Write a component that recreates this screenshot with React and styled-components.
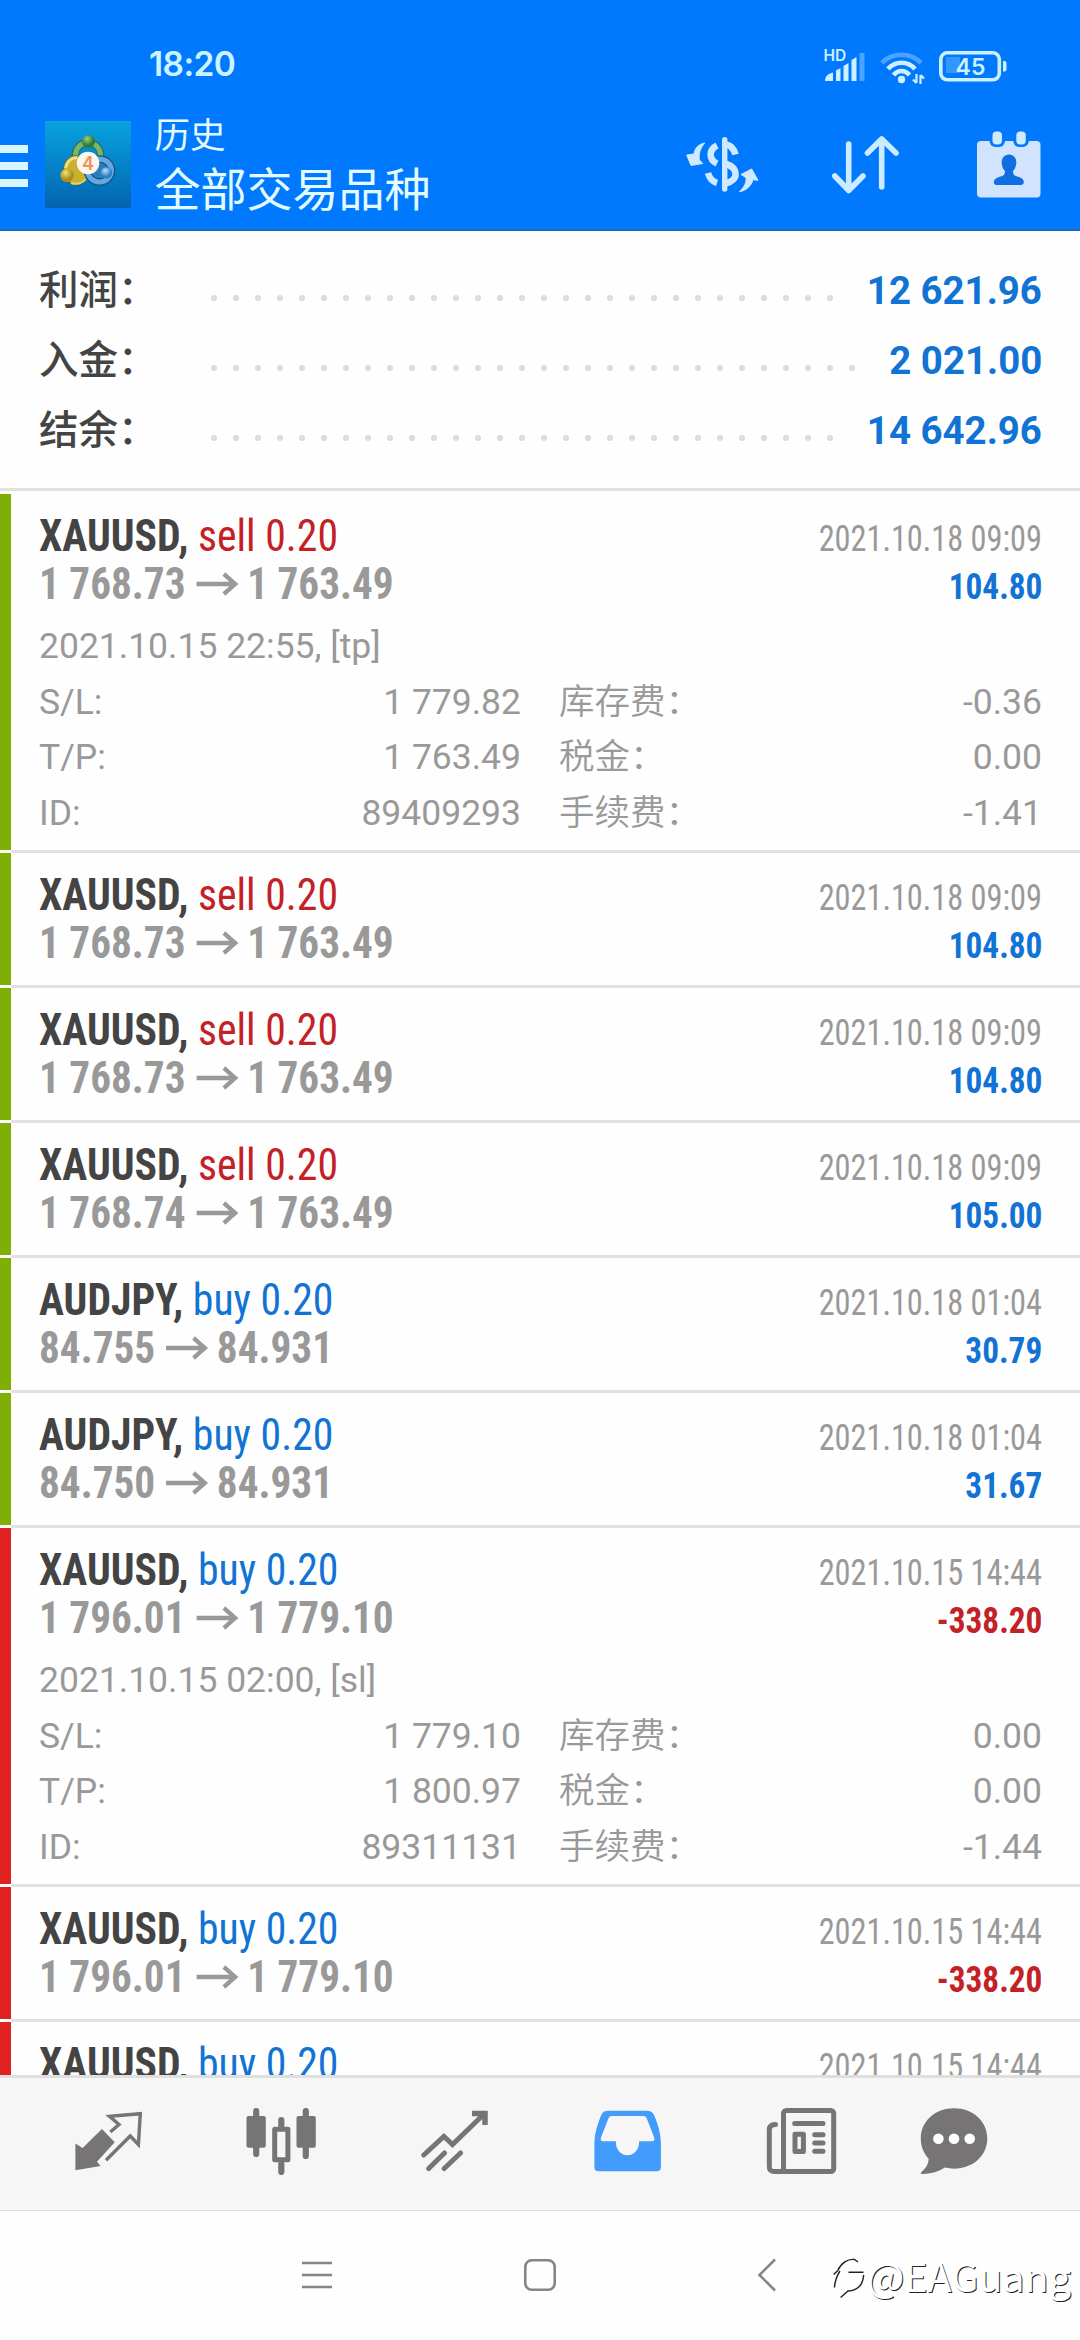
import styled, { createGlobalStyle } from 'styled-components';

const summary = [
	{ label: '利润：', value: '12 621.96' },
	{ label: '入金：', value: '2 021.00' },
	{ label: '结余：', value: '14 642.96' },
];

const trades = [
	{
		symbol: 'XAUUSD', side: 'sell', volume: '0.20', open: '1 768.73', close: '1 763.49', time: '2021.10.18 09:09', profit: '104.80',
		details: { opened: '2021.10.15 22:55, [tp]', sl: '1 779.82', tp: '1 763.49', id: '89409293', swap: '-0.36', taxes: '0.00', fee: '-1.41' },
	},
	{ symbol: 'XAUUSD', side: 'sell', volume: '0.20', open: '1 768.73', close: '1 763.49', time: '2021.10.18 09:09', profit: '104.80' },
	{ symbol: 'XAUUSD', side: 'sell', volume: '0.20', open: '1 768.73', close: '1 763.49', time: '2021.10.18 09:09', profit: '104.80' },
	{ symbol: 'XAUUSD', side: 'sell', volume: '0.20', open: '1 768.74', close: '1 763.49', time: '2021.10.18 09:09', profit: '105.00' },
	{ symbol: 'AUDJPY', side: 'buy', volume: '0.20', open: '84.755', close: '84.931', time: '2021.10.18 01:04', profit: '30.79' },
	{ symbol: 'AUDJPY', side: 'buy', volume: '0.20', open: '84.750', close: '84.931', time: '2021.10.18 01:04', profit: '31.67' },
	{
		symbol: 'XAUUSD', side: 'buy', volume: '0.20', open: '1 796.01', close: '1 779.10', time: '2021.10.15 14:44', profit: '-338.20',
		details: { opened: '2021.10.15 02:00, [sl]', sl: '1 779.10', tp: '1 800.97', id: '89311131', swap: '0.00', taxes: '0.00', fee: '-1.44' },
	},
	{ symbol: 'XAUUSD', side: 'buy', volume: '0.20', open: '1 796.01', close: '1 779.10', time: '2021.10.15 14:44', profit: '-338.20' },
	{ symbol: 'XAUUSD', side: 'buy', volume: '0.20', open: '1 796.01', close: '1 779.10', time: '2021.10.15 14:44', profit: '-338.20' },
];

const StatusIcons = () => (
	<svg width="184" height="38" viewBox="0 0 184 38">
		<text x="0.5" y="15" fontFamily="Inter, sans-serif" fontWeight="600" fontSize="15.5" fill="#cdf0ff">HD</text>
		<g fill="#cdf0ff">
			<path d="M2 35 C2 30 5 28 10 26.500 V35 Z" />
			<path d="M13 24.500 L17.500 22 V35 H13 Z" />
			<path d="M20.500 20 L25.500 17 V35 H20.500 Z" />
			<path d="M28.500 14 L33.500 11 V35 H28.500 Z" />
		</g>
		<path d="M36.500 7 H41.500 V35 H36.500 Z" fill="#4ba4ff" />
		<g fill="none" strokeWidth="4.500">
			<path d="M59 17 C69 6 88 6 98 17" stroke="#4ba4ff" />
			<path d="M65 23 C72 14.500 85 14.500 92 23" stroke="#cdf0ff" />
			<path d="M70.500 29 C75 23.500 82 23.500 86.500 29" stroke="#cdf0ff" />
		</g>
		<circle cx="78.500" cy="33.500" r="3.700" fill="#cdf0ff" />
		<path d="M93.500 28 V37 M93.500 37 L90 33.500 M97.500 38 V29 M97.500 29 L101 32.500" stroke="#cdf0ff" strokeWidth="2.200" fill="none" />
		<rect x="123" y="11" width="14" height="16" fill="#3297ff" />
		<rect x="117.800" y="6.800" width="58.500" height="27" rx="6.500" fill="none" stroke="#cdf0ff" strokeWidth="3.600" />
		<path d="M180 15 h1.500 a2 2 0 0 1 2 2 v6.500 a2 2 0 0 1 -2 2 h-1.500 Z" fill="#cdf0ff" />
		<text x="147.500" y="28.500" textAnchor="middle" fontFamily="Inter, sans-serif" fontWeight="600" fontSize="23" fill="#cdf0ff">45</text>
	</svg>
);

const Logo = () => (
	<svg width="86" height="87" viewBox="0 0 86 87">
		<defs>
			<linearGradient id="tile" x1="0" y1="0" x2="0" y2="1">
				<stop offset="0" stopColor="#08a3e0" />
				<stop offset="0.5" stopColor="#0583c8" />
				<stop offset="1" stopColor="#0463b0" />
			</linearGradient>
			<radialGradient id="green" cx="0.4" cy="0.3"><stop offset="0" stopColor="#9fd07a" /><stop offset="1" stopColor="#2d7a38" /></radialGradient>
			<radialGradient id="yellow" cx="0.4" cy="0.3"><stop offset="0" stopColor="#f2e070" /><stop offset="1" stopColor="#a8901c" /></radialGradient>
			<radialGradient id="sky" cx="0.4" cy="0.3"><stop offset="0" stopColor="#b5e2fb" /><stop offset="1" stopColor="#2d80c6" /></radialGradient>
		</defs>
		<rect width="86" height="87" fill="url(#tile)" />
		<circle cx="43" cy="34" r="12.500" fill="none" stroke="#2c6e50" strokeWidth="7.500" />
		<circle cx="43" cy="34" r="12.500" fill="none" stroke="#7ab56c" strokeWidth="5" />
		<ellipse cx="31" cy="49" rx="12.500" ry="14.500" fill="#c9b030" stroke="#5d6b3c" />
		<path d="M20.500 47 C21.500 41 26 37 32 36.500" fill="none" stroke="#f0e27a" strokeWidth="3" />
		<path d="M26 62 C32 64 38 62 41 58" fill="none" stroke="#e8d35a" strokeWidth="2" />
		<ellipse cx="54.500" cy="49.500" rx="12" ry="11.500" fill="#2a7cba" stroke="#154f86" strokeWidth="7.500" />
		<ellipse cx="54.500" cy="49.500" rx="12" ry="11.500" fill="none" stroke="#62aade" strokeWidth="5" />
		<circle cx="43.500" cy="20.500" r="6.500" fill="url(#green)" />
		<circle cx="22" cy="54.500" r="6.800" fill="url(#yellow)" />
		<circle cx="61.500" cy="52" r="5.800" fill="url(#sky)" />
		<circle cx="43" cy="42" r="11.300" fill="#fbf6f0" />
		<text x="43" y="48.500" textAnchor="middle" fontFamily="Inter, sans-serif" fontWeight="600" fontSize="18" fill="#ee9350">4</text>
	</svg>
);

const CurrencyIcon = () => (
	<svg width="73" height="56" viewBox="0 0 73 56">
		<path d="M38.700 2.700 V52" stroke="#cfe9ff" strokeWidth="5.400" strokeLinecap="round" />
		<g fill="none" stroke="#cfe9ff" strokeWidth="6.600">
			<path d="M31 8.500 C22.500 13 22.500 22.500 31 26.500" />
			<path d="M22 36 C23.500 41.500 26.500 44.500 31 46" />
			<path d="M40 7.500 C45 8.500 48 11.500 49.500 17.500" />
			<path d="M39 26.500 C53 31 53 43 40 46.300" />
		</g>
		<g fill="#cfe9ff" stroke="#cfe9ff" strokeLinejoin="round">
			<path d="M18.700 6 C12 7.500 9 11 8 17 L0.700 18 L5 28.500 L16.700 26.500 L13.300 22.700 C12.500 16 14.500 11 18.700 6 Z" />
			<path d="M53.500 54.700 C58.500 49.500 60.500 46 60 40.500 L55 37.500 L65.700 32 L72 43.300 L67 42.700 C65 49.500 60 53.500 53.500 54.700 Z" />
		</g>
	</svg>
);

const SortIcon = () => (
	<svg width="67" height="58" viewBox="0 0 67 58" fill="none" stroke="#cdebff" strokeWidth="5.600" strokeLinecap="round" strokeLinejoin="round">
		<path d="M16.700 8 V54 M2.800 40 L16.700 54.500 L31 40" />
		<path d="M49.700 51 V3 M35.500 17 L49.700 3 L64 17" />
	</svg>
);

const CalendarIcon = () => (
	<svg width="64" height="67" viewBox="0 0 64 67">
		<rect y="10" width="63.500" height="56.500" rx="4" fill="#d2e4fd" />
		<rect x="12.500" y="-3" width="15.500" height="19" rx="6" fill="#0079ff" />
		<rect x="36.300" y="-3" width="15.500" height="19" rx="6" fill="#0079ff" />
		<rect x="15.500" y="0.500" width="9.500" height="13" rx="4" fill="#cdebff" />
		<rect x="39.300" y="0.500" width="9.500" height="13" rx="4" fill="#cdebff" />
		<path d="M32 23.500 C37 23.500 39.500 27.500 39.300 32 C39 36 37.500 38.500 36 40 C36 44 38 45 42 46 C45.500 47 46.800 49 46.800 51 C46.800 53 45.500 54 44 54 H19.500 C18 54 16.800 53 16.800 51 C16.800 49 18.500 47 22 46 C26 45 28 44 28 40 C26.500 38.500 25 36 24.700 32 C24.500 27.500 27 23.500 32 23.500 Z" fill="#0f6fe0" />
	</svg>
);

const QuotesIcon = () => (
	<svg width="67" height="60" viewBox="0 0 67 60">
		<path d="M0.400 32.500 L7.600 37 L27 18 L39.700 31.300 L22 50.700 L25.500 55 L0.400 59.300 Z" fill="#767474" />
		<path d="M35.300 21 L44 13.500 L34.500 5.300 L65.300 2.700 L63.400 33.500 L55.200 25 L31 49.300" fill="none" stroke="#767474" strokeWidth="3.400" />
	</svg>
);

const ChartIcon = () => (
	<svg width="70" height="67" viewBox="0 0 70 67" fill="#767474" stroke="#767474">
		<path d="M10.200 3 V46 M59.800 3 V48 M35.300 12 V18 M35.300 56 V64" strokeWidth="6.200" strokeLinecap="round" />
		<rect x="0.500" y="8" width="19.300" height="31.700" rx="2" stroke="none" />
		<rect x="50.500" y="8" width="19.300" height="31.700" rx="2" stroke="none" />
		<rect x="28.700" y="21.300" width="13.200" height="30.500" fill="#f7f6f6" strokeWidth="5" strokeLinejoin="round" />
	</svg>
);

const TradeIcon = () => (
	<svg width="67" height="62" viewBox="0 0 67 62" fill="none" stroke="#767474" strokeWidth="5" strokeLinecap="round">
		<path d="M2.800 45 L22.900 26.500 L31.500 34.500 L62 5" />
		<path d="M51 3.500 H64 V15" strokeWidth="5.500" strokeLinecap="butt" />
		<path d="M7.700 58.500 L23.500 43 M23.200 58.500 L39.500 43" />
	</svg>
);

const HistoryIcon = () => (
	<svg width="67" height="62" viewBox="0 0 67 62">
		<path fillRule="evenodd" fill="#429cfb" d="M14 0.700 H53 C56.500 0.700 58.500 2 59.800 4.500 C64 14 66.900 24 66.900 34 V57 C66.900 60 65.500 61.300 62.500 61.300 H4.800 C2 61.300 0.400 60 0.400 57 V34 C0.400 24 3.500 14 7.500 4.500 C8.700 2 10.700 0.700 14 0.700 Z M18 6 C16 6 15 7 14.200 9 L7.200 27 C6.200 29.500 6.700 31.300 9 31.300 H21.800 C21.800 50 45.200 50 45.200 31.300 H58 C60.500 31.300 61 29.500 60 27 L53 9 C52.200 7 51.300 6 49.300 6 Z" />
	</svg>
);

const NewsIcon = () => (
	<svg width="68" height="68" viewBox="1 0 68 68" overflow="visible" fill="none" stroke="#767474" strokeWidth="5" strokeLinecap="round" strokeLinejoin="round">
		<path d="M10.500 17.500 C6.500 17.500 4.300 19 4.300 23 V59 C4.300 63 6 64.500 9.500 64.500 H20" />
		<rect x="18.500" y="3.500" width="50.200" height="61" rx="3" />
		<path d="M29.700 16.500 H58 M49.700 27.700 H58 M49.700 36 H58 M49.700 44.300 H58" />
		<rect x="30" y="27.300" width="8.400" height="17.200" />
	</svg>
);

const ChatIcon = () => (
	<svg width="68" height="67" viewBox="0 0 68 67">
		<path d="M34 0.300 C53 0.300 67.300 13.500 67.300 30.500 C67.300 47.500 53 60.700 34 60.700 C31 60.700 28 60.300 25 59.600 C17 64.500 9 66.300 1.500 66 C0.600 65.300 0.700 64.700 1.500 64 C6 60 8.500 56.500 8.600 50.500 C3.500 45 0.800 38.500 0.800 30.500 C0.800 13.500 15 0.300 34 0.300 Z" fill="#767474" />
		<circle cx="18.400" cy="30.700" r="5.300" fill="#fff" />
		<circle cx="34" cy="30.700" r="5.300" fill="#fff" />
		<circle cx="49.700" cy="30.700" r="5.300" fill="#fff" />
	</svg>
);

const WatermarkLogo = () => (
	<svg width="36" height="44" viewBox="0 0 36 44" fill="none" strokeWidth="1.400">
		<path d="M2.700 17.500 L6.800 13.500 C10 6 17 1.500 23.400 2.500 L27 5 M17.500 15.300 H32.500 M32.700 18 C32 27 27 33.500 17 34 L9.600 40.500 M9 14 C5 20 3.800 25 3.400 30.500" stroke="#222" />
	</svg>
);

const Trade = ({ trade }) => {
	const { symbol, side, volume, open, close, time, profit, details } = trade;
	const loss = profit.startsWith('-');

	return (
		<Row>
			<Marker $loss={loss} />
			<RowBody $open={!!details}>
				<Line>
					<Symbol>{symbol}, <Side $side={side}>{side} {volume}</Side></Symbol>
					<Time>{time}</Time>
				</Line>
				<Line>
					<Price>
						{open}
						<svg width="45" height="27" viewBox="0 0 45 27" fill="none" stroke="#999" strokeWidth="4.300">
							<path d="M0 12 H41 M29 2 L41 12 L29 22" />
						</svg>
						{close}
					</Price>
					<Profit $loss={loss}>{profit}</Profit>
				</Line>
				{details && (
					<Details>
						<Opened>{details.opened}</Opened>
						<span>S/L:</span><Value>{details.sl}</Value><Fee>库存费：</Fee><Value>{details.swap}</Value>
						<span>T/P:</span><Value>{details.tp}</Value><Fee>税金：</Fee><Value>{details.taxes}</Value>
						<span>ID:</span><Value>{details.id}</Value><Fee>手续费：</Fee><Value>{details.fee}</Value>
					</Details>
				)}
			</RowBody>
		</Row>
	);
};

const App = () => (
	<Screen>
		<GlobalStyle />
		<Header>
			<StatusBar>
				<Clock>18:20</Clock>
				<StatusIcons />
			</StatusBar>
			<AppBar>
				<Menu><i /><i /><i /></Menu>
				<Logo />
				<Titles>
					<small>历史</small>
					<h1>全部交易品种</h1>
				</Titles>
				<Actions>
					<CurrencyIcon />
					<SortIcon />
					<CalendarIcon />
				</Actions>
			</AppBar>
		</Header>
		<Summary>
			{summary.map((item) => (
				<SummaryRow key={item.label}>
					<SummaryLabel>{item.label}</SummaryLabel>
					<Dots />
					<SummaryValue>{item.value}</SummaryValue>
				</SummaryRow>
			))}
		</Summary>
		<List>
			{trades.map((trade, i) => <Trade key={i} trade={trade} />)}
		</List>
		<TabBar>
			<Tab><QuotesIcon /></Tab>
			<Tab><ChartIcon /></Tab>
			<Tab><TradeIcon /></Tab>
			<Tab><HistoryIcon /></Tab>
			<Tab><NewsIcon /></Tab>
			<Tab><ChatIcon /></Tab>
		</TabBar>
		<SystemNav>
			<svg width="32" height="34" viewBox="0 0 32 34" stroke="#858585" strokeWidth="2.600"><path d="M1 5 H31 M1 17 H31 M1 29 H31" /></svg>
			<svg width="32" height="34" viewBox="0 0 32 34" fill="none" stroke="#858585" strokeWidth="2.600"><rect x="1.300" y="2.300" width="29.400" height="29.400" rx="6.500" /></svg>
			<svg width="32" height="34" viewBox="0 0 32 34" fill="none" stroke="#858585" strokeWidth="2.600"><path d="M28 1.500 L12.500 17 L28 32.500" /></svg>
			<Watermark><WatermarkLogo />@EAGuang</Watermark>
		</SystemNav>
	</Screen>
);

const GlobalStyle = createGlobalStyle`
	* {
		box-sizing: border-box;
	}

	body {
		margin: 0;
		background: #fff;
		font-family: Roboto, "Noto Sans CJK SC", sans-serif;
	}

	svg {
		display: block;
		flex: none;
	}
`;

const Screen = styled.div`
	display: flex;
	flex-direction: column;
	width: 1080px;
	height: 2340px;
	overflow: hidden;
	background: #fefefe;
`;

const Header = styled.header`
	flex: none;
	height: 231px;
	background: #0079ff;
	border-bottom: 2px solid #1e67b4;
`;

const StatusBar = styled.div`
	display: flex;
	align-items: center;
	justify-content: space-between;
	height: 88px;
	padding: 41px 73px 0 149px;
`;

const Clock = styled.span`
	color: #cdf3ff;
	font-family: Inter, Roboto, sans-serif;
	font-size: 33.5px;
	font-weight: 600;
	letter-spacing: -0.6px;
	line-height: 49px;
`;

const AppBar = styled.div`
	display: flex;
	align-items: center;
	height: 141px;
	padding: 12px 39px 0 0;
`;

const Menu = styled.div`
	display: flex;
	flex-direction: column;
	gap: 9px;
	width: 28px;
	margin: 3px 17px 0 0;

	i {
		height: 8px;
		background: #d8f6ff;
	}
`;

const Titles = styled.div`
	margin: -4px 0 0 23.5px;
	color: #e2fbff;
	font-family: "Noto Sans CJK SC", sans-serif;

	small {
		display: block;
		font-size: 35.5px;
		line-height: 47px;
	}

	h1 {
		margin: 0;
		font-size: 46px;
		font-weight: 400;
		line-height: 60px;
	}
`;

const Actions = styled.div`
	display: flex;
	align-items: center;
	gap: 73px;
	margin-left: auto;

	svg:last-child {
		margin-left: 5px;
	}
`;

const Summary = styled.section`
	flex: none;
	height: 260px;
	margin-bottom: 3px;
	padding: 25px 38px 0 39px;
	border-bottom: 3px solid #e2e2e2;
`;

const SummaryRow = styled.div`
	display: flex;
	align-items: baseline;
	height: 70px;
	font-size: 39.5px;
	font-weight: 500;
	line-height: 70px;
`;

const SummaryLabel = styled.span`
	width: 163.5px;
	color: #444;
`;

const Dots = styled.span`
	align-self: stretch;
	flex: 1;
	margin-right: 21px;
	background: radial-gradient(circle, #dcdcdc 2.6px, transparent 3.6px) 0 31px / 22px 22px repeat-x;
`;

const SummaryValue = styled.span`
	color: #1173d4;
	font-weight: 700;
	transform: scaleX(0.973);
	transform-origin: right;
`;

const List = styled.main`
	flex: none;
	height: 1581px;
	overflow: hidden;
`;

const Row = styled.article`
	display: flex;
`;

const Marker = styled.div`
	width: 11px;
	margin-bottom: 3px;
	background: ${(props) => (props.$loss ? '#e02222' : '#7fae04')};
`;

const RowBody = styled.div`
	flex: 1;
	height: ${(props) => (props.$open ? '359px' : '135px')};
	padding: 19px 38px 0 28px;
	border-bottom: 3px solid #e2e2e2;
`;

/* Roboto's condensed cut is still a little wide, so each text is squeezed towards its own edge */
const Line = styled.div`
	display: flex;
	align-items: baseline;
	justify-content: space-between;
	height: 48px;
	font-family: "Roboto Condensed", Roboto, sans-serif;
	font-stretch: 75%;
	line-height: 48px;
	white-space: nowrap;
`;

const Symbol = styled.strong`
	color: #444;
	font-size: 43.5px;
	font-weight: 700;
	transform: scaleX(0.959);
	transform-origin: left;
`;

const Side = styled.span`
	color: ${(props) => (props.$side === 'sell' ? '#c42127' : '#1173d4')};
	font-weight: 400;
`;

const Price = styled.span`
	color: #999;
	font-size: 43.5px;
	font-weight: 700;
	transform: scaleX(0.948);
	transform-origin: left;

	svg {
		display: inline-block;
		margin: 0 9px 0 11px;
	}
`;

const Time = styled.span`
	color: #999;
	font-size: 36px;
	transform: scaleX(0.897);
	transform-origin: right;
`;

const Profit = styled.span`
	color: ${(props) => (props.$loss ? '#c42127' : '#1173d4')};
	font-size: 36px;
	font-weight: 700;
	transform: scaleX(0.924);
	transform-origin: right;
`;

const Details = styled.div`
	display: grid;
	grid-template-columns: 100px 382px 180px 1fr;
	grid-auto-rows: 55.7px;
	align-items: baseline;
	margin-top: 10px;
	color: #999;
	font-size: 35.5px;
	font-weight: 400;
	line-height: 55.7px;
	white-space: nowrap;
`;

const Opened = styled.span`
	grid-column: 1 / -1;
`;

const Value = styled.span`
	text-align: right;
`;

const Fee = styled.span`
	padding-left: 38px;
	font-weight: 350;
`;

const TabBar = styled.nav`
	display: grid;
	flex: none;
	grid-template-columns: repeat(5, 173px) 134px;
	height: 136px;
	padding: 0 0 6px 21.5px;
	border-top: 3px solid #dfdfdf;
	border-bottom: 1px solid #dcdcdc;
	background: #f7f6f6;
`;

const Tab = styled.div`
	display: flex;
	align-items: center;
	justify-content: center;
`;

const SystemNav = styled.footer`
	position: relative;
	display: grid;
	flex: 1;
	grid-template-columns: repeat(3, 223px);
	place-items: center;
	padding: 0 0 2px 205.5px;
`;

const Watermark = styled.div`
	position: absolute;
	right: 9px;
	bottom: 39px;
	display: flex;
	align-items: center;
	color: #fff;
	font-family: "Noto Sans CJK SC", sans-serif;
	font-size: 39.5px;
	line-height: 50px;
	text-shadow: 1px 1px 0 #222;

	svg {
		margin-top: 8px;
	}
`;

export default App;
